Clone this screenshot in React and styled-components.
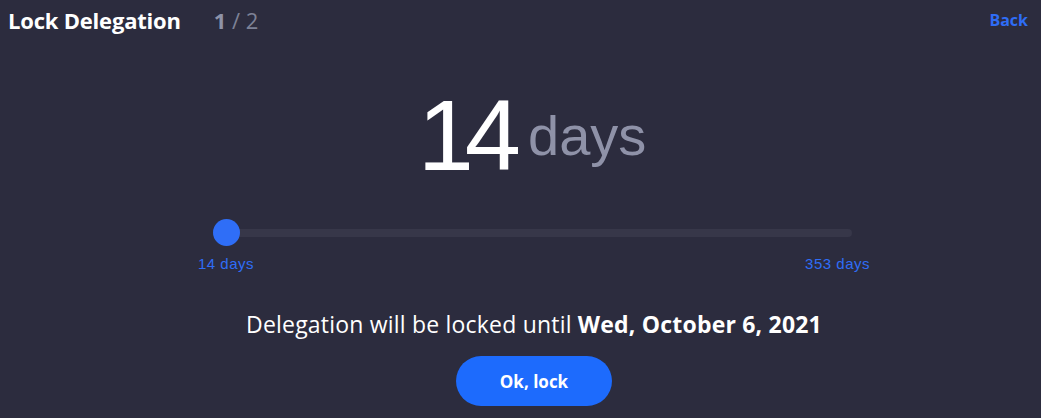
import styled, { createGlobalStyle } from 'styled-components';

const GlobalStyle = createGlobalStyle`
    html, body {
        margin: 0;
        padding: 0;
        background: #2c2c3e;
    }
    body {
        font-family: "Open Sans", "Liberation Sans", sans-serif;
        color: #ffffff;
    }
`

function App() {
    const min = 14;
    const max = 353;
    const value = 14;
    const percent = ((value - min) / (max - min)) * 100;

    return (
        <>
            <GlobalStyle />
            <Page>
                <Header>
                    <TitleGroup>
                        <Title>Lock Delegation</Title>
                        <Steps><b>1</b> / 2</Steps>
                    </TitleGroup>
                    <BackLink href="#back">Back</BackLink>
                </Header>

                <Main>
                    <Amount>
                        <Number>14</Number>
                        <Unit>days</Unit>
                    </Amount>

                    <Slider>
                        <TrackRow>
                            <Track />
                            <Thumb style={{ left: `${percent}%` }} />
                        </TrackRow>
                        <Limits>
                            <span>14 days</span>
                            <span>353 days</span>
                        </Limits>
                    </Slider>

                    <Notice>
                        Delegation will be locked until <strong>Wed, October 6, 2021</strong>
                    </Notice>

                    <LockButton type="button">Ok, lock</LockButton>
                </Main>
            </Page>
        </>
    )
}

export default App;

const Page = styled.div`
    width: 1041px;
    height: 418px;
    overflow: hidden;
    display: flex;
    flex-direction: column;
`

const Header = styled.div`
    height: 40px;
    display: flex;
    align-items: center;
    justify-content: space-between;
    padding: 0 13px 0 8px;
`

const TitleGroup = styled.div`
    display: flex;
    align-items: center;
    gap: 33px;
`

const Title = styled.h1`
    margin: 0;
    font-size: 22px;
    font-weight: 700;
    letter-spacing: -0.2px;
    color: #ffffff;
`

const Steps = styled.span`
    font-size: 22px;
    color: #7d8196;

    b {
        color: #8e93a8;
        font-weight: 700;
    }
`

const BackLink = styled.a`
    font-size: 16px;
    font-weight: 700;
    color: #2f6df6;
    text-decoration: none;
`

const Main = styled.div`
    display: flex;
    flex-direction: column;
    align-items: center;
    padding-left: 27px;
`

const Amount = styled.div`
    margin: 45px 4px 0 0;
    display: flex;
    align-items: center;
    gap: 16px;
    font-family: "Liberation Sans", Arial, sans-serif;
`

const Number = styled.span`
    font-size: 101px;
    line-height: 1;
    color: #ffffff;
    letter-spacing: -9px;
`

const Unit = styled.span`
    font-size: 56px;
    line-height: 1;
    padding-top: 1px;
    color: #8f92a8;
`

const Slider = styled.div`
    width: 672px;
    margin-top: 33px;
`

const TrackRow = styled.div`
    position: relative;
    height: 27px;
    margin: 0 18px 0 15px;
    display: flex;
    align-items: center;
`

const Track = styled.div`
    flex: 1;
    height: 8px;
    border-radius: 4px;
    background: #373749;
`

const Thumb = styled.div`
    position: absolute;
    top: 0;
    width: 27px;
    height: 27px;
    border-radius: 50%;
    background: #2f6ef7;
`

const Limits = styled.div`
    margin-top: 9px;
    display: flex;
    justify-content: space-between;
    font-family: "Liberation Sans", Arial, sans-serif;
    font-size: 15px;
    line-height: 18px;
    letter-spacing: 0.5px;
    color: #2f6df6;
    white-space: nowrap;
`

const Notice = styled.p`
    margin: 38px 0 0;
    font-size: 23px;
    line-height: 26px;
    letter-spacing: 0.2px;
    color: #ffffff;

    strong {
        font-weight: 700;
    }
`

const LockButton = styled.button`
    margin-top: 19px;
    width: 156px;
    height: 50px;
    border: none;
    border-radius: 25px;
    background: #1d6bfd;
    color: #ffffff;
    font-family: "Open Sans", "Liberation Sans", sans-serif;
    font-size: 17px;
    font-weight: 700;
    cursor: pointer;
`
